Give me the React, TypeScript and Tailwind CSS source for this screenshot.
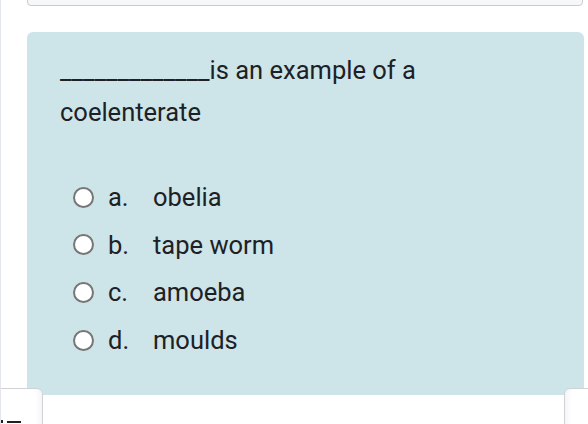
export default function App() {
	const options = [
		{ key: "a.", label: "obelia" },
		{ key: "b.", label: "tape worm" },
		{ key: "c.", label: "amoeba" },
		{ key: "d.", label: "moulds" },
	];

	return (
		<div className="relative h-[424px] w-[588px] overflow-hidden border-l border-[#e3e6ea] bg-white font-['Roboto',sans-serif] text-[#1d2125]">
			{/* previous question box, cut off at the top */}
			<div className="ml-[26px] mr-[5px] -mt-[10px] h-[16px] rounded-b-[4px] border border-[#c8ccd1] bg-[#f6f7f9]" />

			{/* question card */}
			<div className="ml-[26px] mr-[4px] mt-[26px] h-[363px] rounded-t-[6px] bg-[#cde5e9] pl-[33px] pr-6 pt-[17px]">
				<p className="text-[25.5px] leading-[42px]">
					_____________is an example of a
					<br />
					coelenterate
				</p>

				<div className="mt-[48px] flex flex-col gap-[15.7px]">
					{options.map((o) => (
						<label key={o.key} className="flex h-[32px] items-center">
							<span className="ml-[13px] h-[21px] w-[21px] rounded-full border-2 border-[#767676] bg-white" />
							<span className="ml-[14px] w-[45px] text-[25.5px]">{o.key}</span>
							<span className="text-[25.5px]">{o.label}</span>
						</label>
					))}
				</div>
			</div>

			{/* bottom panels */}
			<div className="absolute left-[-10px] top-[388px] h-[60px] w-[52px] rounded-tr-[6px] border border-[#cfd3d7] bg-white shadow-[inset_-6px_0_6px_-4px_rgba(0,0,0,0.06)]">
				<div className="absolute left-[9px] top-[31px] flex items-center gap-[4px]">
					<span className="h-[3px] w-[2px] bg-[#1d2125]" />
					<span className="h-[2px] w-[14px] bg-[#1d2125]" />
				</div>
			</div>
			<div className="absolute left-[563px] top-[388px] h-[60px] w-[40px] rounded-tl-[6px] border border-[#cfd3d7] bg-white shadow-[inset_6px_0_6px_-4px_rgba(0,0,0,0.06)]" />
		</div>
	);
}
